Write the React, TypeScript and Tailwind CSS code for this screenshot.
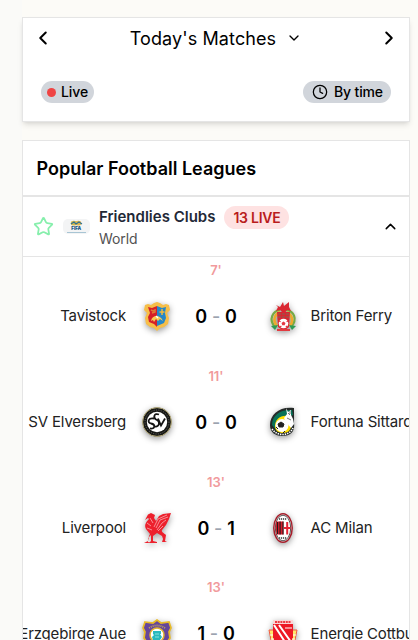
import type { ReactNode } from "react";
import { ChevronDown, ChevronLeft, ChevronRight, ChevronUp, Clock, Star } from "lucide-react";

function TavistockCrest() {
  return (
    <svg viewBox="0 0 30 30" className="size-[30px]">
      <path d="M3 3 6 2l3 1 3-2 3-1 3 1 3 2 3-1 3 1 1 5-3 3 2 5-1 6-4 3-4 1-3 3-3-3-4-1-4-3-1-6 2-5-3-3z" fill="#f6be48" />
      <path d="M6 5 10 6l5-2v21l-3-3-5-2-1-5 2-4z" fill="#d51f29" />
      <path d="m15 4 5 2 4-1-1 6 1 5-2 5-7 3z" fill="#2587c9" />
      <path d="m9 8 2 1 2-1v2l-3 1" stroke="#e07a35" strokeWidth="1.5" fill="none" />
      <path d="M20 7v6m-2.5-3h5" stroke="#f0b93e" strokeWidth="1.5" fill="none" />
      <path d="M9 19c1-6 9-7 12 0l-3-2-2 2-2-2-2 3-1-2z" fill="#f8cb55" />
      <path d="m14 14 2 2" stroke="#fff" strokeWidth="1.5" />
    </svg>
  );
}

function BritonCrest() {
  return (
    <svg viewBox="0 0 30 30" className="size-[30px]">
      <path d="M7 25C0 17 5 9 12 8m6 0c8 1 12 9 5 17" stroke="#76aa44" strokeWidth="2.2" fill="none" />
      <path d="M9 24C4 18 7 12 12 10m7 0c5 3 7 8 3 14" stroke="#eda92d" strokeWidth="2.6" fill="none" />
      <path d="m8 3 4 2 3-5 1 4 5-4v5l2 4-4-1-3 4-4-4-4 1 2-4z" fill="#da2731" />
      <path d="M9 10h13l-1 15-5 4-6-4z" fill="#d92632" />
      <path d="M10 12h11M10 15h11" stroke="#9d5148" strokeWidth="1.5" strokeDasharray="3 1" />
      <circle cx="15.5" cy="21.5" r="4.8" fill="#fff" />
      <path d="m15.5 19.4 2 1.6-.8 2.3h-2.4l-.8-2.3z" fill="#e33843" />
      <path d="m11 19 1.6.8m6-.1 1.6-.8M12 25l1.4-1m4.4 0 1.4 1" stroke="#e33843" strokeWidth="1.2" />
      <path d="m3 24 7-1-3 5zm18-1 7 1-4 4z" fill="#2f9b55" />
      <path d="M9 28h13" stroke="#e23b40" strokeWidth="2" />
    </svg>
  );
}

function ElversbergCrest() {
  return (
    <svg viewBox="0 0 30 30" className="size-[30px]">
      <circle cx="15" cy="15" r="14.4" fill="#171816" stroke="#b5aa78" />
      <circle cx="15" cy="15" r="12" fill="none" stroke="#696963" strokeDasharray="1 1.4" />
      <circle cx="15" cy="15" r="10.2" fill="#fff" />
      <path d="M17 7.5c-5-2-6 3-3 5 5 2 3 8-1 7m-1-8c-6-1-7 4-3 5 5 1 4 6-1 5m8-10 3 7 4-7" stroke="#151515" strokeWidth="1.8" fill="none" />
    </svg>
  );
}

function FortunaCrest() {
  return (
    <svg viewBox="0 0 30 30" className="size-[30px]">
      <path d="M26 1C12-1 2 7 2 18c0 7 5 11 12 11 10 0 13-6 12-13z" fill="#252a28" />
      <path d="M24 3C13 2 4 8 4 18l5 6 3-12 13-4z" fill="#087358" />
      <path d="M20 9C12 8 7 13 7 19c0 5 4 7 8 7 6 0 9-4 8-10z" fill="#ffdf00" />
      <circle cx="14" cy="18.5" r="6.5" fill="#fff" />
      <path d="m13 15 3 2-1 3h-4l-1-3zM8 20l2 2m7 2-2 2" stroke="#222" fill="#222" />
      <path d="m18 1 2 4 3-2v5l2 4 1 5-3 4-5-6-2-4 3-4z" fill="#fff" />
      <path d="m20 6 2 2m0-4v3m-3 4 4 2" stroke="#777" />
      <path d="M4 22c5 7 17 8 21-1" stroke="#fff" strokeWidth="1.6" strokeDasharray="1.4 1" fill="none" />
    </svg>
  );
}

function LiverpoolCrest() {
  return (
    <svg viewBox="0 0 30 30" className="size-[30px]">
      <path d="M6 1.5 9 0l4 2-1 3 2 3 3-5 4-2 8-1-2 6-3 6-4 5c-1 2 2 3 4 5l-1 6 2 1h-5l1-3-1-3-5-3-4 3v5l4 1v1h-8l2-2v-6l-3 3v4l3 1H2l4-2 1-5 1-2-4-5c-2-4 0-7 3-10L6 5 3 7z" fill="#ed202c" />
      <path d="m12 14 4-8 9-4m-11 13 4-8 8-3m-11 13 5-7 4-3m-8 11 5-5M5 10l4 3m-4 2 5 2M8 5l3 5" stroke="#fff" strokeWidth=".5" fill="none" />
    </svg>
  );
}

function MilanCrest() {
  return (
    <svg viewBox="0 0 30 30" className="size-[30px]">
      <ellipse cx="15" cy="15" rx="9.2" ry="14.2" fill="#fff" stroke="#a61e2b" strokeWidth="1.5" />
      <ellipse cx="15" cy="15" rx="7.7" ry="12.8" fill="#fff" stroke="#292323" strokeWidth=".8" />
      <path d="M8 8.5h7.5v13H8.5q-1.6-6-.5-13" fill="#d41f2d" />
      <path d="M9.5 9v12m2.6-12.500v13m2.900-13v13" stroke="#24191c" strokeWidth="1.1" />
      <path d="M19.200 9v12.500m-3.200-6.500h6.500" stroke="#e52335" strokeWidth="2" />
      <path d="M11 6h8m-8 19h8" stroke="#666" strokeWidth="2" strokeDasharray="1.2 .8" />
    </svg>
  );
}

function AueCrest() {
  return (
    <svg viewBox="0 0 30 30" className="size-[30px]">
      <path d="m3 3 8 1 4-3 4 3 8-1 2 6-2 4 1 6-4 6-5 1-4 3-4-3-5-1-4-6 1-6-2-4z" fill="#65469b" stroke="#e8bb27" strokeWidth="1.7" />
      <path d="M7 9q8-5 16 0" fill="none" stroke="#c4aa54" strokeWidth="1.8" strokeDasharray="1 1" />
      <circle cx="15" cy="16" r="7" fill="#fff" stroke="#e1b42f" strokeWidth="1.500" />
      <path d="M11 12h8v3h-1l2 3-2 3h-7l-1-3 2-2-1-1z" fill="#29b9bd" />
      <path d="M13 15h4m-4 3h4" stroke="#8be0dc" />
    </svg>
  );
}

function CottbusCrest() {
  return (
    <svg viewBox="0 0 30 30" className="size-[30px]">
      <path d="M1 11h28l-2 10-6 7H9l-6-7z" fill="#ffe66b" stroke="#f15b43" />
      <path d="M5 1h20v18l-5 9H10l-5-9z" fill="#ed1825" />
      <path d="M5 1h20v4H5z" fill="#fbd5d6" />
      <path d="M7 3h16" stroke="#ed3b43" strokeWidth="2" strokeDasharray="2 .7" />
      <path d="m6 6 13 20M11 6l12 17" stroke="#fff" strokeWidth="2" />
      <path d="M17 9h7M2 16h3m20 0h3M3 20h3m18 0h3" stroke="#fff" />
    </svg>
  );
}

function FifaBadge() {
  return (
    <svg viewBox="0 0 27 15" className="h-[15px] w-[27px] shrink-0">
      <rect width="27" height="15" rx="5" fill="#f3f4f5" />
      <ellipse cx="10.8" cy="4.2" rx="3" ry="2.4" fill="#d6b84e" />
      <ellipse cx="15.3" cy="4.2" rx="3" ry="2.4" fill="#e2b64d" />
      <path d="m8 5 3-2 2 2 3-2 3 2" stroke="#2d7094" strokeWidth="1.1" fill="none" />
      <text x="13.3" y="11.2" textAnchor="middle" fontFamily="Inter, sans-serif" fontSize="4.6" fontWeight="900" fill="#195482">FIFA</text>
      <path d="M4 13.5h19" stroke="#9fc0d0" strokeWidth=".9" />
    </svg>
  );
}

interface Match {
  minute: string;
  home: string;
  away: string;
  score: [number, number];
  crests: [ReactNode, ReactNode];
}

const matches: Match[] = [
  { minute: "7'", home: "Tavistock", away: "Briton Ferry", score: [0, 0], crests: [<TavistockCrest />, <BritonCrest />] },
  { minute: "11'", home: "SV Elversberg", away: "Fortuna Sittard", score: [0, 0], crests: [<ElversbergCrest />, <FortunaCrest />] },
  { minute: "13'", home: "Liverpool", away: "AC Milan", score: [0, 1], crests: [<LiverpoolCrest />, <MilanCrest />] },
  { minute: "13'", home: "Erzgebirge Aue", away: "Energie Cottbus", score: [1, 0], crests: [<AueCrest />, <CottbusCrest />] },
];

function MatchRow({ match }: { match: Match }) {
  return (
    <article className="flex h-[105.75px] flex-col items-center pt-[3px]">
      <span className="text-[13px] leading-5 font-semibold text-[#f19a9c]">{match.minute}</span>
      <div className="mt-[20.6px] flex h-[32px] w-full items-center">
        <span className="flex w-[103px] shrink-0 justify-end overflow-hidden text-[15px] tracking-[-0.17px] whitespace-nowrap text-[#222]">{match.home}</span>
        <span className="ml-4 shrink-0 drop-shadow-[0_2px_3px_rgba(0,0,0,0.4)]">{match.crests[0]}</span>
        <span className="ml-[14px] flex w-[60px] shrink-0 justify-center gap-[5px] text-[18px] font-semibold tracking-[-0.2px] text-black">
          <span>{match.score[0]}</span>
          <span className="font-medium text-[#9ca3af]">-</span>
          <span>{match.score[1]}</span>
        </span>
        <span className="ml-[22px] shrink-0 drop-shadow-[0_2px_3px_rgba(0,0,0,0.4)]">{match.crests[1]}</span>
        <span className="ml-[12.6px] shrink-0 text-[15px] tracking-[-0.17px] whitespace-nowrap text-[#222]">{match.away}</span>
      </div>
    </article>
  );
}

export default function App() {
  return (
    <div className="flex h-screen overflow-hidden bg-[#fcfbf7] font-['Inter',sans-serif]">
      <div className="w-[22px] shrink-0 bg-[#fafaf8]" />
      <main className="w-[388px] shrink-0 pt-[17px]">
        <section className="h-[105px] border border-[#e5e5e5] bg-white shadow-md">
          <div className="flex h-10 items-center justify-between px-[9px]">
            <button aria-label="Previous day"><ChevronLeft size={22} strokeWidth={2.2} /></button>
            <button className="flex items-center gap-[10px] text-[18px] tracking-[0.1px]">Today's Matches <ChevronDown size={16} /></button>
            <button aria-label="Next day"><ChevronRight size={22} strokeWidth={2.2} /></button>
          </div>
          <div className="mt-[23px] flex justify-between px-[18px]">
            <button className="flex h-[22px] w-[53px] items-center gap-[5px] rounded-full bg-[#d1d5db] pl-[6px] text-sm font-medium tracking-[-0.1px]">
              <span className="size-[9px] rounded-full bg-[#ef4444]" />Live
            </button>
            <button className="flex h-[22px] w-[88px] items-center gap-[6px] rounded-full bg-[#d1d5db] pl-[9px] text-sm font-medium tracking-[-0.15px]">
              <Clock size={16} strokeWidth={1.9} />By time
            </button>
          </div>
        </section>
        <section className="mt-[18px] h-[550px] overflow-hidden border border-[#e5e5e5] bg-white">
          <h1 className="flex h-[56px] items-center border-b-2 border-[#e5e5e5] pl-[13.5px] text-[18px] font-semibold">Popular Football Leagues</h1>
          <div className="flex h-[60px] items-center border-b border-[#e5e5e5] px-[10px]">
            <Star size={21} className="shrink-0 text-[#86efac]" strokeWidth={2} />
            <div className="ml-[9px]"><FifaBadge /></div>
            <div className="ml-[9px] pt-px">
              <div className="flex h-[23px] items-center gap-[9px]">
                <h2 className="text-[15px] font-semibold text-[#1f2937]">Friendlies Clubs</h2>
                <span className="flex h-[23px] w-[65px] items-center justify-center rounded-full bg-[#fee2e2] text-[14px] font-semibold tracking-[-0.25px] text-[#b91c1c]">13 LIVE</span>
              </div>
              <p className="text-sm leading-5 tracking-[-0.1px] text-[#525252]">World</p>
            </div>
            <ChevronUp size={17} strokeWidth={2.1} className="ml-auto" />
          </div>
          {matches.map((match) => <MatchRow key={match.home} match={match} />)}
        </section>
      </main>
    </div>
  );
}
